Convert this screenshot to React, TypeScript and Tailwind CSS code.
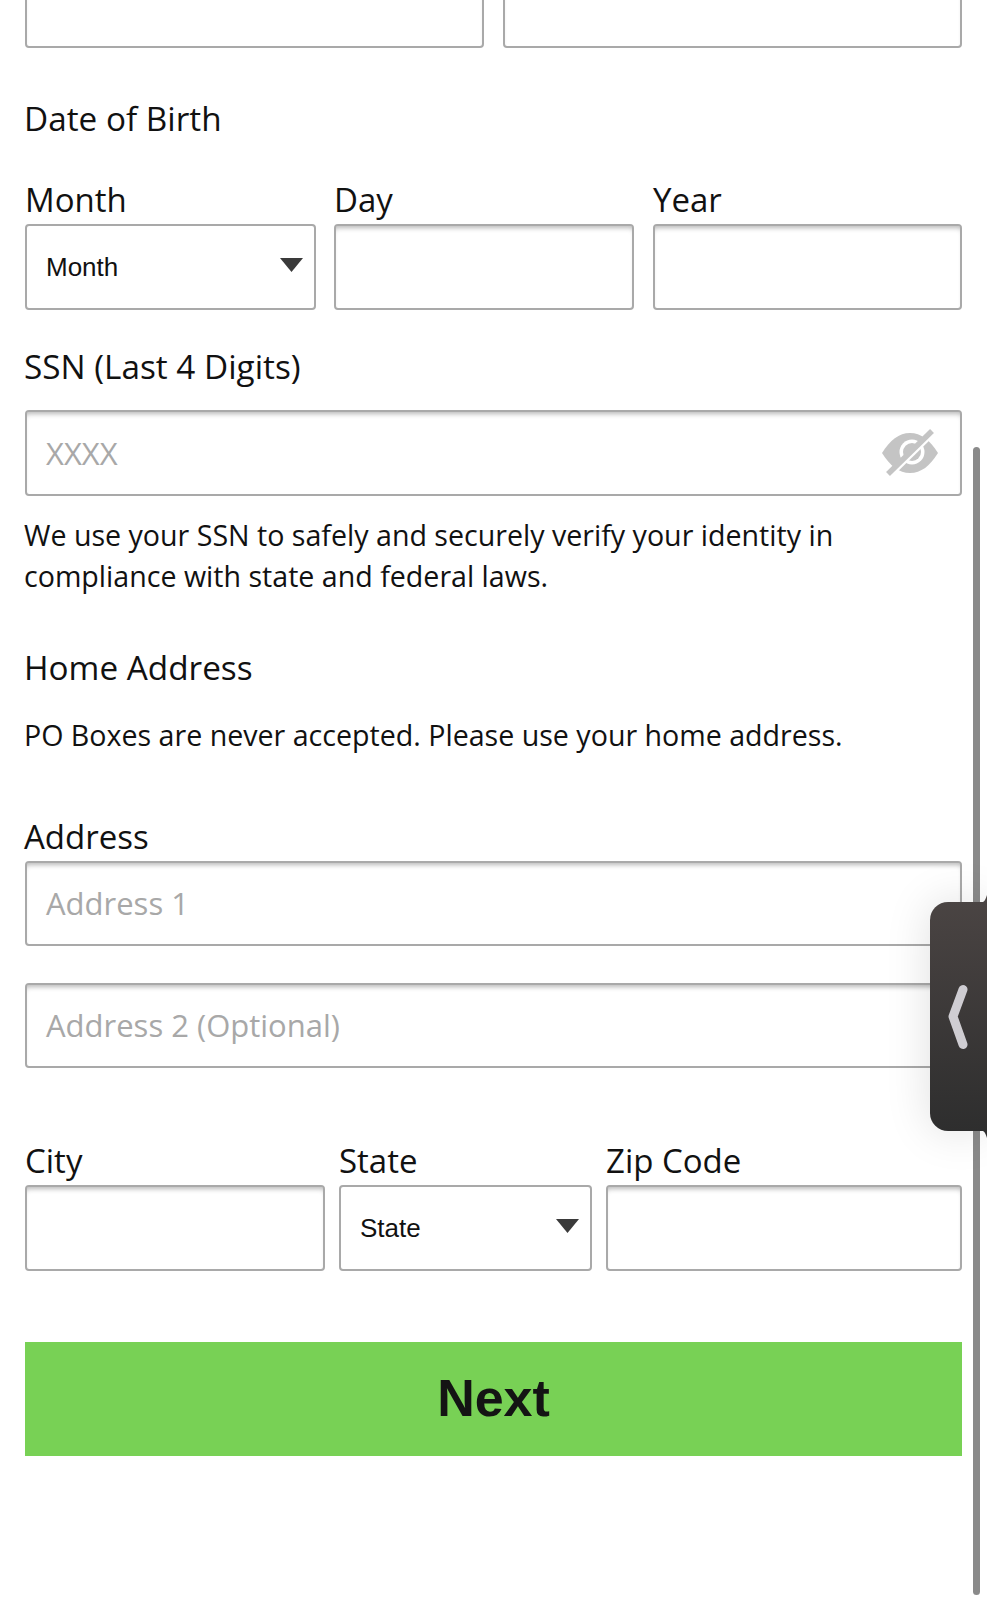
const font = "font-['Open_Sans',sans-serif]";
const inputBox =
  "rounded-[4px] border-[2px] border-[#a9a9a9] bg-white shadow-[inset_0_5px_5px_-3px_rgba(0,0,0,0.28)]";
const selectBox =
  "h-[86px] rounded-[4px] border-[2px] border-[#a9a9a9] bg-white flex items-center justify-between";

function Input({ className = "h-[86px]", placeholder }: { className?: string; placeholder?: string }) {
  return (
    <div className={`${inputBox} ${className} flex items-center pl-[19px]`}>
      {placeholder && <span className="text-[31px] leading-none text-[#a8a8a8]">{placeholder}</span>}
    </div>
  );
}

function Caret() {
  return (
    <svg width="23" height="14" viewBox="0 0 23 14" className="shrink-0">
      <polygon points="0,0 23,0 11.5,14" fill="#3a3a3a" />
    </svg>
  );
}

function Label({ children }: { children: string }) {
  return <div className="h-[34px] text-[33px] leading-[34px] text-[#111] whitespace-nowrap">{children}</div>;
}

export default function App() {
  return (
    <div className={`${font} relative w-[987px] h-[1600px] overflow-hidden bg-white text-[#111]`}>
      <div className="pl-[25px] w-[962px]">
        <div className="flex gap-[19px] -mt-[38px]">
          <Input className="h-[86px] w-[459px]" />
          <Input className="h-[86px] w-[459px]" />
        </div>

        <div className="mt-[50px] h-[40px] -ml-[1px] text-[33.3px] leading-[40px]">Date of Birth</div>

        <div className="mt-[45px] flex">
          <div className="w-[291px]">
            <Label>Month</Label>
            <div className={`${selectBox} mt-[7px] pl-[19px] pr-[11px]`}>
              <span className="text-[26px] font-['Liberation_Sans',sans-serif] leading-none">Month</span>
              <span className="-mt-[5px] flex"><Caret /></span>
            </div>
          </div>
          <div className="w-[300px] ml-[18px]">
            <Label>Day</Label>
            <Input className="h-[86px] mt-[7px]" />
          </div>
          <div className="w-[309px] ml-[19px]">
            <Label>Year</Label>
            <Input className="h-[86px] mt-[7px]" />
          </div>
        </div>

        <div className="mt-[36px] h-[40px] -ml-[1px] text-[33.3px] leading-[40px]">SSN (Last 4 Digits)</div>
        <div className={`${inputBox} h-[86px] mt-[24px] w-[937px] flex items-center justify-between pl-[19px] pr-[22px]`}>
          <span className="text-[31px] leading-none text-[#a8a8a8]">XXXX</span>
          <svg width="56" height="48" viewBox="0 0 56 48" className="-mt-[3px]">
            <path fill="#c4c4c4" d="M0 25C8 12 17 5 28 5c11 0 20 7 28 20-8 13-17 20-28 20S8 38 0 25z" />
            <circle cx="30" cy="24" r="12.5" fill="#ffffff" />
            <circle cx="30" cy="24" r="9" fill="#c4c4c4" />
            <path d="M9 48 L53 5" stroke="#ffffff" strokeWidth="3" />
            <path d="M6 46 L50 3" stroke="#c4c4c4" strokeWidth="5.5" />
          </svg>
        </div>

        <div className="mt-[19px] -ml-[1px] text-[28.6px] leading-[40.5px] w-[900px]">
          We use your SSN to safely and securely verify your identity in compliance with state and federal laws.
        </div>

        <div className="mt-[51px] h-[40px] -ml-[1px] text-[33.3px] leading-[40px]">Home Address</div>
        <div className="mt-[28px] h-[40px] -ml-[1px] text-[28.6px] leading-[40px] whitespace-nowrap">
          PO Boxes are never accepted. Please use your home address.
        </div>

        <div className="mt-[65px] -ml-[1px]"><Label>Address</Label></div>
        <Input className="h-[85px] mt-[7px] w-[937px]" placeholder="Address 1" />
        <Input className="h-[85px] mt-[37px] w-[937px]" placeholder="Address 2 (Optional)" />

        <div className="mt-[76px] flex">
          <div className="w-[300px]">
            <Label>City</Label>
            <Input className="h-[86px] mt-[7px]" />
          </div>
          <div className="w-[253px] ml-[14px]">
            <Label>State</Label>
            <div className={`${selectBox} mt-[7px] pl-[19px] pr-[11px]`}>
              <span className="text-[26px] font-['Liberation_Sans',sans-serif] leading-none">State</span>
              <span className="-mt-[5px] flex"><Caret /></span>
            </div>
          </div>
          <div className="w-[356px] ml-[14px]">
            <Label>Zip Code</Label>
            <Input className="h-[86px] mt-[7px]" />
          </div>
        </div>

        <div className="mt-[71px] h-[114px] w-[937px] bg-[#78d155] flex items-center justify-center pb-[3px] font-['Liberation_Sans',sans-serif] font-bold text-[52px] leading-none text-[#141414]">
          Next
        </div>
      </div>

      <div className="absolute left-[973px] top-[447px] w-[7px] h-[1148px] rounded-full bg-[#8a8a8a]" />

      <div className="absolute left-[930px] top-[902px] w-[57px] h-[229px] rounded-l-[18px] bg-gradient-to-b from-[#4a4443] to-[#2e2e2e] shadow-[0_0_45px_rgba(0,0,0,0.13)] flex items-center pl-[17px]">
        <svg width="24" height="66" viewBox="0 0 24 66">
          <path d="M16 5.5 L6 32.5 L16 60.5" fill="none" stroke="#cfcdd2" strokeWidth="9" strokeLinecap="round" strokeLinejoin="round" />
        </svg>
      </div>
      <svg width="4" height="7" viewBox="0 0 4 7" className="absolute left-[983px] top-[895px]">
        <path d="M0 7C2 6 3 3 4 0V7z" fill="#4a4443" />
      </svg>
      <svg width="4" height="7" viewBox="0 0 4 7" className="absolute left-[983px] top-[1131px]">
        <path d="M0 0C2 1 3 4 4 7V0z" fill="#2e2e2e" />
      </svg>
    </div>
  );
}
